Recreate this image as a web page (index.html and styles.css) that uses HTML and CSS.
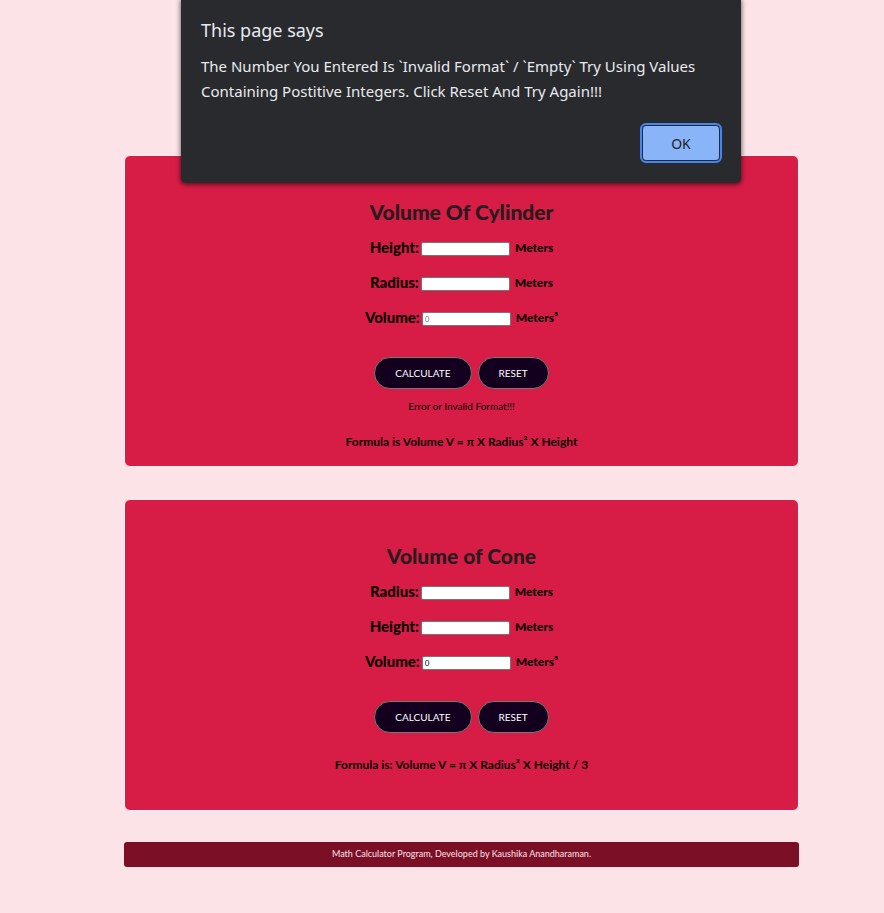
FILE: index.html
```html
<!DOCTYPE html>
<html lang="en">
<head>
<meta charset="utf-8">
<meta name="viewport" content="width=device-width, initial-scale=1">
<title>Math Calculator</title>
<link rel="stylesheet" href="styles.css">
</head>
<body>
<main class="page">
  <form class="card">
    <h1 class="title">Volume Of Cylinder</h1>
    <div class="fields">
      <div class="row"><label for="cyl-height">Height:</label><input id="cyl-height" type="text"><span class="unit">Meters</span></div>
      <div class="row"><label for="cyl-radius">Radius:</label><input id="cyl-radius" type="text"><span class="unit">Meters</span></div>
      <div class="row"><label for="cyl-volume">Volume:</label><input id="cyl-volume" type="text" placeholder="0"><span class="unit">Meters³</span></div>
    </div>
    <div class="actions"><button class="pill" type="button">CALCULATE</button><button class="pill" type="reset">RESET</button></div>
    <p class="message">Error or Invalid Format!!!</p>
    <p class="formula">Formula is Volume V = π X Radius² X Height</p>
  </form>
  <form class="card">
    <h1 class="title">Volume of Cone</h1>
    <div class="fields">
      <div class="row"><label for="cone-radius">Radius:</label><input id="cone-radius" type="text"><span class="unit">Meters</span></div>
      <div class="row"><label for="cone-height">Height:</label><input id="cone-height" type="text"><span class="unit">Meters</span></div>
      <div class="row"><label for="cone-volume">Volume:</label><input id="cone-volume" type="text" value="0"><span class="unit">Meters³</span></div>
    </div>
    <div class="actions"><button class="pill" type="button">CALCULATE</button><button class="pill" type="reset">RESET</button></div>
    <p class="formula">Formula is: Volume V = π X Radius² X Height / 3</p>
  </form>
  <footer class="footer">Math Calculator Program, Developed by Kaushika Anandharaman.</footer>
</main>
<div class="dialog" role="alertdialog" aria-labelledby="dialog-title" aria-describedby="dialog-text">
  <h2 class="dialog-title" id="dialog-title">This page says</h2>
  <p class="dialog-text" id="dialog-text">The Number You Entered Is `Invalid Format` / `Empty` Try Using Values Containing Postitive Integers. Click Reset And Try Again!!!</p>
  <button class="ok" type="button">OK</button>
</div>
</body>
</html>
```
FILE: styles.css
```css
* { box-sizing: border-box; }

body {
  margin: 0;
  background: #fbe3e8;
  color: #080204;
  font-family: "Gill Sans MT", "Gill Sans", Lato, sans-serif;
}

.page {
  display: flex;
  flex-direction: column;
  gap: 32px;
  padding: 155px 85px 46px 124px;
}

.card {
  display: flex;
  flex-direction: column;
  align-items: center;
  min-height: 312px;
  padding: 44px 16px 12px;
  border: 1px solid #fff0f3;
  border-radius: 6px;
  background: #d71c45;
}

.title {
  margin: 0 0 11px;
  color: #271b1d;
  font-size: 21px;
  font-weight: 900;
  line-height: 24px;
}

.fields {
  display: grid;
  gap: 11px;
}

.row {
  display: flex;
  align-items: center;
  justify-content: center;
  height: 24px;
  font-weight: 900;
}

.row label {
  margin-right: 2px;
  font-size: 15px;
}

.row input {
  width: 89px;
  height: 14px;
  margin: 3px 5px 0 0;
  padding: 0 2px;
  border: 1px solid #767676;
  border-radius: 2px;
  background: #fff;
  font: 8px Lato, sans-serif;
}

.row input::placeholder { color: #757575; }

.unit { font-size: 12px; }

.actions {
  display: flex;
  gap: 6px;
  margin-top: 28px;
}

.pill {
  height: 32px;
  padding: 0 20px;
  border: 1px solid #767676;
  border-radius: 16px;
  background: #13001f;
  color: #fff;
  font: 10px "Gill Sans MT", "Gill Sans", Lato, sans-serif;
}

.message {
  margin: 9px 0 -16px;
  font-size: 10px;
  line-height: 16px;
}

.formula {
  margin: 24px 0 0;
  font-size: 12px;
  font-weight: 700;
  line-height: 16px;
}

.message + .formula { margin-top: 36px; }

.footer {
  margin-top: -1px;
  padding: 4px 8px 5px;
  border-radius: 3px;
  background: #7b0f26;
  color: #fbe3e8;
  font-size: 9px;
  line-height: 16px;
  text-align: center;
}

.dialog {
  position: absolute;
  top: 0;
  left: 181px;
  right: 143px;
  display: flex;
  flex-direction: column;
  padding: 18px 20px 22px;
  border-radius: 0 0 5px 5px;
  background: #292a2d;
  box-shadow: 0 1px 4px 1px rgb(0 0 0 / 50%);
  color: #e8eaed;
  font-family: "Segoe UI", "Noto Sans", sans-serif;
}

.dialog-title {
  margin: 0 0 12px;
  font-size: 18px;
  font-weight: 400;
  line-height: 24px;
}

.dialog-text {
  margin: 0 0 21px;
  font-size: 15px;
  line-height: 25px;
}

.ok {
  align-self: flex-end;
  width: 78px;
  height: 36px;
  margin-right: 1px;
  border: 1px solid #292a2d;
  border-radius: 4px;
  outline: 2px solid #4285f4;
  background: #8ab4f8;
  color: #202124;
  font: 14px "Segoe UI", "Noto Sans", sans-serif;
}
```
